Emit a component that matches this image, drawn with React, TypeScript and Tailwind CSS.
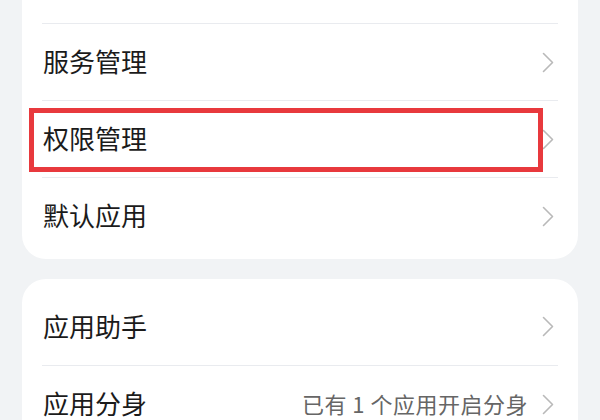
const font = {
  fontFamily: '"Noto Sans CJK SC", "Noto Sans", sans-serif',
};

function Chevron() {
  return (
    <svg width="12" height="21" viewBox="0 0 12 21" fill="none" className="shrink-0">
      <polyline
        points="1.5,1.5 10.5,10.5 1.5,19.5"
        stroke="#b9b9b9"
        strokeWidth="1.6"
        strokeLinecap="round"
        strokeLinejoin="round"
      />
    </svg>
  );
}

type Row = { label: string; value?: string; highlight?: boolean };

function SettingRow({ row, first }: { row: Row; first?: boolean }) {
  return (
    <div className="relative px-[20px]">
      <div
        className={
          "flex h-[77px] items-center justify-between " +
          (first ? "" : "border-t border-[#e9ebef]")
        }
      >
        <span className="-mt-[3px] pl-[1px] text-[26px] text-[#1b1b1b]">{row.label}</span>
        <div className="flex items-center gap-[14px] pr-[4px]">
          {row.value && (
            <span className="-mt-[2px] text-[22px] tracking-[0.5px] text-[#666666]">{row.value}</span>
          )}
          {row.label && <Chevron />}
        </div>
      </div>
      {row.highlight && (
        <div className="absolute left-[7px] top-[8px] h-[64px] w-[514px] border-[5px] border-[#e8393d]" />
      )}
    </div>
  );
}

const groupOne: Row[] = [
  { label: "" },
  { label: "服务管理" },
  { label: "权限管理", highlight: true },
  { label: "默认应用" },
];

const groupTwo: Row[] = [
  { label: "应用助手" },
  { label: "应用分身", value: "已有 1 个应用开启分身" },
];

export default function App() {
  return (
    <div className="h-[420px] w-[600px] overflow-hidden bg-[#f1f3f5] px-[22px]" style={font}>
      <div className="-mt-[54px] rounded-[24px] bg-white pb-[5px]">
        {groupOne.map((row, i) => (
          <SettingRow key={i} row={row} first={i === 0} />
        ))}
      </div>
      <div className="mt-[20px] rounded-[24px] bg-white pt-[9px]">
        {groupTwo.map((row, i) => (
          <SettingRow key={i} row={row} first={i === 0} />
        ))}
      </div>
    </div>
  );
}
